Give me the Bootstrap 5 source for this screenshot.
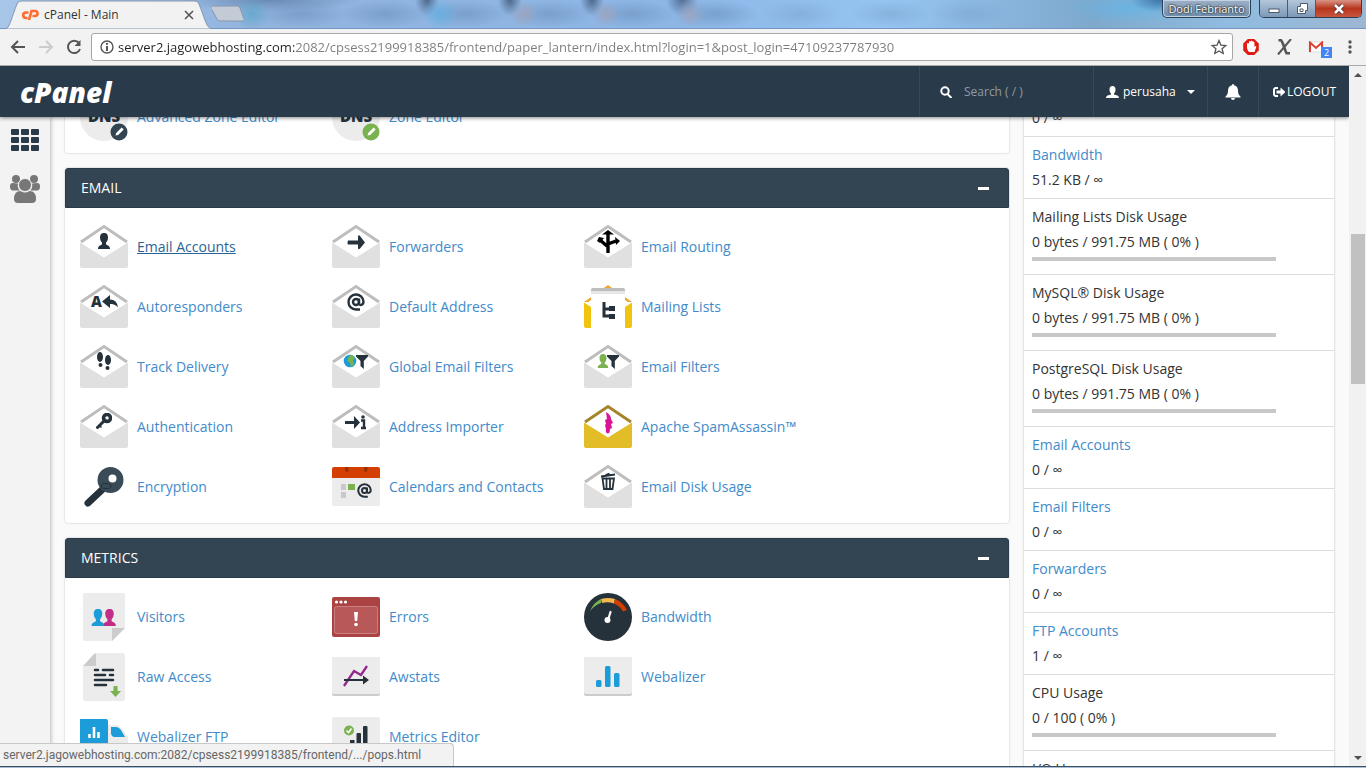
<!DOCTYPE html>
<html lang="en">
<head>
<meta charset="utf-8">
<meta name="viewport" content="width=device-width, initial-scale=1">
<title>cPanel - Main</title>
<link rel="stylesheet" href="https://cdn.jsdelivr.net/npm/bootstrap@5.3.0/dist/css/bootstrap.min.css">
<style>
body{font-family:"Open Sans","Noto Sans",sans-serif;font-size:14px;line-height:20px;color:#333;background:#fafafa}
a{color:#428bca;text-decoration:none}
a:hover,a.hovered{color:#2a6496;text-decoration:underline}
button{font:inherit}
/* browser window */
.win-strip{height:29px;border-bottom:1px solid #7596c4;
 background:
 radial-gradient(ellipse 18px 16px at 252px 14px,#5aa4c8c0,transparent),
 radial-gradient(ellipse 18px 16px at 440px 14px,#5fb0e0c0,transparent),
 radial-gradient(ellipse 14px 14px at 524px 14px,#a3a3b8c0,transparent),
 radial-gradient(ellipse 14px 14px at 606px 14px,#a3a3b8c0,transparent),
 radial-gradient(ellipse 14px 14px at 690px 14px,#a3a3b8c0,transparent),
 radial-gradient(ellipse 50px 14px at 300px 14px,#6d92bfa0,transparent),
 radial-gradient(ellipse 46px 14px at 385px 14px,#6d92bfa0,transparent),
 radial-gradient(ellipse 44px 14px at 466px 14px,#6d92bfa0,transparent),
 radial-gradient(ellipse 44px 14px at 550px 14px,#6d92bfa0,transparent),
 radial-gradient(ellipse 44px 14px at 632px 14px,#6d92bfa0,transparent),
 radial-gradient(ellipse 44px 14px at 715px 14px,#6d92bfa0,transparent),
 radial-gradient(ellipse 40px 14px at 800px 14px,#7fa6d2a0,transparent),
 radial-gradient(ellipse 40px 14px at 890px 14px,#7fa6d2a0,transparent),
 radial-gradient(ellipse 40px 14px at 970px 14px,#7fa6d2a0,transparent),
 radial-gradient(ellipse 12px 16px at 427px 0,#38506ec0,transparent),
 radial-gradient(ellipse 12px 16px at 510px 0,#38506ec0,transparent),
 radial-gradient(ellipse 12px 16px at 592px 0,#38506ec0,transparent),
 radial-gradient(ellipse 16px 16px at 682px 0,#41597ac0,transparent),
 radial-gradient(ellipse 90px 12px at 270px 0,#55779fb0,transparent),
 radial-gradient(ellipse 30px 12px at 1160px 0,#1d5a92b0,transparent),
 radial-gradient(ellipse 70px 16px at 1130px 8px,#62b6e6c0,transparent),
 linear-gradient(90deg,#a8c6e8 0,#92b4de 18%,#8db6e6 50%,#95c5f2 65%,#7fa8cc 80%,#8fbce0 90%,#9db6d2 100%)}
.win-tab{width:212px;height:29px}
.win-tab-label{top:4px;left:44px;right:18px;line-height:22px;font-size:12px;color:#333}
.win-user{height:18px;width:89px;font-size:11px;line-height:16px;color:#fff;text-shadow:0 0 2px #111,0 0 2px #111;background:linear-gradient(#9db1c7,#6f8dab);border:1px solid #2c3f55;border-top:0;border-radius:0 0 5px 5px;box-shadow:inset 0 0 0 1px #c4d3e3}
.win-controls{height:18px;border:1px solid #2c3f55;border-top:0;border-radius:0 0 5px 5px;overflow:hidden}
.win-controls button{width:28px;background:linear-gradient(#b4c6da,#7c98b8);border:0;border-right:1px solid #45597a}
.win-controls button:last-child{width:45px;background:linear-gradient(#d99486,#b8351d 50%,#c9563f);border-right:0}
.win-bar{height:37px;background:#f2f2f2;border-bottom:1px solid #aaa;padding:0 14px 0 9px}
.win-back{margin-right:12px}
.win-address{height:28px;background:#fff;border:1px solid #a6a6a6;border-radius:3px}
.win-address input{font-size:13px;color:#777;background:linear-gradient(90deg,#222 176px,#7c7c7c 176px);-webkit-background-clip:text;background-clip:text;-webkit-text-fill-color:transparent;outline:0}
.win-badge{right:-8px;bottom:-5px;font-size:9px;line-height:11px;width:11px;color:#fff;background:#4285f4}
.win-status{left:0;bottom:0;width:454px;height:23px;background:#f2f2f2;border:1px solid #c8c8c8;border-left:0;border-bottom:0;border-top-right-radius:4px;color:#666;font-family:Roboto,"Open Sans",sans-serif;font-size:12px;line-height:22px;padding-left:3px}
.win-foot{height:2px;border-top:1px solid #3a4f66;background:#a9bdd3}
.scroll-rail{width:17px;background:#f1f1f1}
.scroll-rail button{height:17px}
.rail-above{flex:151}
.rail-below{flex:365}
.scroll-thumb{background:#c1c1c1;margin:0 1px 0 2px;flex:150}
/* control panel */
.cp-head{height:51px;background:#293a4a;color:#fff;font-size:12px;box-shadow:0 1px 4px #0007;z-index:3}
.cp-head > .cell{border-left:1px solid #35495b}
.cp-head a,.cp-head button{color:#fff}
.cp-logo{font-size:28px;font-weight:800;font-style:italic;line-height:40px}
.cp-search{width:174px}
.cp-search input{color:#fff;outline:0}
.cp-search input::placeholder{color:#8f9aa3;opacity:1}
.cp-user{width:114px;padding:0 12px}
.cp-bell{width:51px}
.cp-out{padding:0 13px;gap:2px}
.cp-side{width:50px;background:#f3f3f3;box-shadow:1px 0 4px #0004;padding-top:12px;gap:23px;z-index:2}
.cp-wrap{gap:15px;padding:0 15px}
.cp-main{margin-top:-39px;gap:15px}
.cp-panel{background:#fff;border-radius:3px;box-shadow:0 0 2px #0004}
.cp-title{height:40px;background:#334452;border:1px solid #293a4a;border-radius:3px 3px 0 0;color:#fff;padding:0 19px 0 15px}
.cp-items{display:grid;grid-template-columns:repeat(auto-fill,237px);column-gap:15px;grid-auto-rows:60px;padding:9px 15px 6px}
.cp-items a{display:flex;align-items:center;gap:9px;white-space:nowrap}
.cp-items svg{width:48px;height:48px;flex:none}
.cp-aside{width:310px;margin-top:-17px;background:#fff;box-shadow:0 0 2px #0004}
.cp-stat{padding:5px 8px 6px;border-bottom:1px solid #ddd;line-height:25px}
.cp-stat .progress{width:83%;height:4px;border-radius:0;background:#c8c8c8;margin:3px 0 7px}
</style>
</head>
<body class="vh-100 overflow-hidden d-flex flex-column">
<svg class="d-none" xmlns="http://www.w3.org/2000/svg">
 <symbol id="env" viewBox="0 0 48 48"><path d="M1 19 24 3.500 47 19" fill="#fff" stroke="#bdbdbd" stroke-width="3"/><path d="M3 20 24 5.500 45 20 24 36z" fill="#fff"/><path d="M0 19.500 24 34.500 48 19.500V43a2 2 0 0 1-2 2H2a2 2 0 0 1-2-2z" fill="#e0e0e0"/></symbol>
 <symbol id="man" viewBox="0 0 12 16"><path d="M6 0c3 0 4 2 4 4.500S9 8.500 8 9.500v2c2 1 4 1.500 4 4.500H0c0-3 2-3.500 4-4.500v-2C3 8.500 2 7 2 4.500S3 0 6 0z"/></symbol>
 <symbol id="funnel" viewBox="0 0 12 14"><path d="M0 0h12v1.500L7.800 6v8L4.500 11V6L0 1.500z"/></symbol>
 <symbol id="at" viewBox="0 0 18 18"><g fill="none" stroke="#25313b" stroke-width="2.400"><circle cx="9" cy="9" r="3"/><path d="M12 5.500V10c0 3 4.500 2.500 4.500-1.500A7.500 7.500 0 1 0 9 16.500h4"/></g></symbol>
 <symbol id="minkey" viewBox="0 0 16 16"><path d="M1.500 14.500 9 7" stroke="#25313b" stroke-width="3" stroke-linecap="round"/><path d="m3 12 2.500 2.500" stroke="#25313b" stroke-width="1.500"/><circle cx="11" cy="5" r="3.500" fill="none" stroke="#25313b" stroke-width="3.500"/></symbol>
 <symbol id="dns" viewBox="0 0 48 48"><circle cx="24" cy="24" r="24" fill="#ececec"/><text x="24" y="29" text-anchor="middle" font-family="Open Sans" font-weight="800" font-size="15" fill="#25313b">DNS</text></symbol>
 <symbol id="pen" viewBox="0 0 18 18"><circle cx="9" cy="9" r="8.500"/><path d="m5.500 12.500.7-2.600 5.500-5.500 2 2-5.500 5.500z" fill="#fff"/></symbol>
</svg>

<header class="win-strip d-flex justify-content-between flex-shrink-0">
 <div class="d-flex">
  <div class="win-tab position-relative">
   <svg class="d-block" width="212" height="29" viewBox="0 0 212 29"><path d="M6 29C10 27 12 16 17 4q1-3 4-3h174q3 0 4 3c5 12 7 23 12 25z" fill="#f2f2f2" stroke="#8496b0"/><g fill="none" stroke="#ff6c2c" stroke-width="2.600"><path d="M28.500 12.500h-2.500a2.700 2.700 0 0 0 0 5.500h1.500"/><path d="m29 20 2.500-9h3.500a2.300 2.300 0 0 1 0 5h-2.500"/></g></svg>
   <div class="win-tab-label position-absolute d-flex justify-content-between align-items-center"><span>cPanel - Main</span><button class="btn p-0 border-0 d-flex" aria-label="Close tab"><svg width="10" height="10" viewBox="0 0 10 10"><path d="m1 1 8 8M9 1 1 9" stroke="#555" stroke-width="1.600"/></svg></button></div>
  </div>
  <button class="btn p-0 border-0 d-flex align-items-center" aria-label="New tab"><svg width="32" height="18" viewBox="0 0 32 18"><path d="M0 1h25q2 0 3 2l4 11q1 2-1 2H8q-2 0-3-2L-1 3q-1-2 1-2z" fill="#c2cbd6" stroke="#8797ac"/></svg></button>
 </div>
 <div class="d-flex gap-2 pe-1">
  <button class="win-user p-0">Dodi Febrianto</button>
  <div class="win-controls d-flex">
   <button class="p-0" aria-label="Minimize"><svg class="d-block mx-auto" width="12" height="14"><rect x="1" y="7" width="10" height="3.500" fill="#fff" stroke="#4b5a6c"/></svg></button>
   <button class="p-0" aria-label="Restore"><svg class="d-block mx-auto" width="14" height="14" fill="none"><path d="M5.500 1.500h7v7h-2v3h-8v-7h3z" fill="#fff" stroke="#4b5a6c"/><path d="M5 7h3v2.500H5z" stroke="#4b5a6c"/></svg></button>
   <button class="p-0" aria-label="Close"><svg class="d-block mx-auto" width="14" height="14"><path d="m3 3 8 8M11 3l-8 8" stroke="#5a2a2a" stroke-width="4.500"/><path d="m3 3 8 8M11 3l-8 8" stroke="#fff" stroke-width="2.600"/></svg></button>
  </div>
 </div>
</header>

<nav class="win-bar d-flex align-items-center flex-shrink-0" aria-label="Browser">
 <button class="btn win-back p-0 border-0 d-flex" aria-label="Back"><svg width="18" height="18" fill="none" stroke="#555" stroke-width="2"><path d="M16 9H3M9 3 3 9l6 6"/></svg></button>
 <button class="btn p-0 border-0 d-flex me-2" aria-label="Forward"><svg width="18" height="18" fill="none" stroke="#ccc" stroke-width="2"><path d="M0 9h13M7 3l6 6-6 6"/></svg></button>
 <button class="btn p-0 border-0 d-flex me-2" aria-label="Reload"><svg width="18" height="18" fill="none" stroke="#555" stroke-width="2"><path d="M14 5a6.200 6.200 0 1 0 1 6"/><path d="M15.500 2v6h-6z" fill="#555" stroke="none"/></svg></button>
 <div class="win-address flex-grow-1 d-flex align-items-center px-1">
  <svg class="mx-1 flex-shrink-0" width="14" height="14" fill="none" stroke="#555" stroke-width="1.400"><circle cx="7" cy="7" r="6"/><path d="M7 6v5M7 3v1.800" stroke-width="2"/></svg>
  <input class="flex-grow-1 border-0 p-0" type="text" aria-label="Address" value="server2.jagowebhosting.com:2082/cpsess2199918385/frontend/paper_lantern/index.html?login=1&amp;post_login=47109237787930">
  <button class="btn p-0 border-0 d-flex" aria-label="Bookmark"><svg width="18" height="16" fill="none" stroke="#555" stroke-width="1.300"><path d="m9 1.500 1.900 4.600 4.900.4-3.700 3.200 1.100 4.800L9 12l-4.200 2.500 1.100-4.800-3.700-3.200 4.900-.4z"/></svg></button>
 </div>
 <button class="btn p-0 border-0 d-flex ms-2 me-3" aria-label="Content blocker"><svg width="20" height="18" viewBox="0 0 20 18"><path d="M6.800 1h6.400l4.600 4.500v7L13.200 17H6.800l-4.600-4.500v-7z" fill="#e11b14"/><path d="M6 9.500V6q0-1 1-1t1 1V4q0-1 1-1t1 1V3q1-1 1.600 0v1q1.400-1 1.800.5V9q1-1.500 2-.5L13.500 14H8q-2-2-2-4.500z" fill="#fff"/></svg></button>
 <button class="btn p-0 border-0 d-flex me-3" aria-label="Extension"><svg width="15" height="16" fill="none" stroke="#555"><path d="M1.500 1.200H4C6 3 7.500 10 9.500 14.300H13" stroke-width="2.600"/><path d="M14 0 1 15.500" stroke-width="2"/></svg></button>
 <button class="btn p-0 border-0 d-flex position-relative me-4" aria-label="Mail"><svg width="16" height="12"><path d="M1 1h14v10H1z" fill="#fff" stroke="#ddd"/><path d="M2 11V1.500L8 7l6-5.500V11" fill="none" stroke="#dd4034" stroke-width="2"/></svg><span class="win-badge position-absolute">2</span></button>
 <button class="btn p-0 border-0 d-flex" aria-label="Menu"><svg width="4" height="14" fill="#555"><circle cx="2" cy="2" r="1.700"/><circle cx="2" cy="7" r="1.700"/><circle cx="2" cy="12" r="1.700"/></svg></button>
</nav>

<div class="d-flex flex-grow-1 overflow-hidden position-relative">
 <div class="flex-grow-1 d-flex flex-column overflow-hidden">
  <header class="cp-head d-flex align-items-stretch flex-shrink-0 position-relative">
   <a class="cp-logo me-auto ms-3 ps-1 align-self-center" href="#">cPanel</a>
   <label class="cell cp-search d-flex align-items-center overflow-hidden"><svg class="ms-3 me-2 flex-shrink-0" width="20" height="12" fill="none" stroke="#fff" stroke-width="2"><circle cx="9" cy="5" r="3.700"/><path d="m11.500 8 4 4"/></svg><input class="bg-transparent border-0 p-0 w-50" type="text" placeholder="Search ( / )" aria-label="Search"></label>
   <button class="cell cp-user border-top-0 border-end-0 border-bottom-0 bg-transparent d-flex align-items-center"><svg width="13" height="12" fill="#fff"><path d="M6.500 0C8.500 0 9.500 1.500 9.500 3.500S9 6.500 8 7.500v1c2.500.5 5 1 5 3.500H0C0 9.500 2.500 9 5 8.500v-1C4 6.500 3.500 5.500 3.500 3.500S4.500 0 6.500 0z"/></svg><span class="ms-1 me-auto">perusaha</span><svg width="8" height="4" fill="#fff"><path d="M0 0h8L4 4z"/></svg></button>
   <button class="cell cp-bell border-top-0 border-end-0 border-bottom-0 bg-transparent d-flex align-items-center justify-content-center" aria-label="Notifications"><svg width="16" height="16" fill="#fff"><path d="M8 0q1 0 1 1.200c3 .6 4 3 4 5.800 0 3 1 4 2.500 5.500v1H.5v-1C2 11 3 10 3 7c0-2.800 1-5.200 4-5.800Q7 0 8 0zM6 14h4q0 2-2 2t-2-2z"/></svg></button>
   <a class="cell cp-out d-flex align-items-center" href="#"><svg width="13" height="12"><path d="M6 2H3.500A2 2 0 0 0 2 3.500v4.500A2 2 0 0 0 3.500 10H6" fill="none" stroke="#fff" stroke-width="2"/><path d="M4.500 4.500h4v-3l5 4.500-5 4.500v-3h-4z" fill="#fff"/></svg>LOGOUT</a>
  </header>
  <div class="d-flex flex-grow-1 overflow-hidden">
   <aside class="cp-side d-flex flex-column align-items-center flex-shrink-0">
    <a href="#" aria-label="Home"><svg class="d-block" width="28" height="23" fill="#293a4a"><path id="tile" d="M1 0h6q1 0 1 1v4q0 1-1 1H1Q0 6 0 5V1q0-1 1-1z"/><use href="#tile" x="10"/><use href="#tile" x="20"/><use href="#tile" y="8"/><use href="#tile" x="10" y="8"/><use href="#tile" x="20" y="8"/><use href="#tile" y="16"/><use href="#tile" x="10" y="16"/><use href="#tile" x="20" y="16"/></svg></a>
    <a href="#" aria-label="User manager"><svg class="d-block" width="30" height="28" fill="#777"><circle cx="6" cy="4" r="4"/><circle cx="24" cy="4" r="4"/><path d="M8 8.500Q7 13 10 15.500H3q-3 0-3-4Q0 8 2.500 8zM22 8.500q1 4.500-2 7h7q3 0 3-4Q30 8 27.500 8z"/><circle cx="15" cy="10" r="6.500" stroke="#f3f3f3"/><path d="M10.500 16q4.500 3 9 0Q26 16 26 24q0 4-4 4H8q-4 0-4-4 0-8 6.500-8z"/></svg></a>
   </aside>
   <div class="flex-grow-1 d-flex align-items-start cp-wrap">
    <main class="cp-main flex-grow-1 d-flex flex-column">
     <section class="cp-panel"><div class="cp-items">
      <a href="#"><svg><use href="#dns"/><use href="#pen" x="30" y="30" width="18" height="18" fill="#334452"/></svg>Advanced Zone Editor</a>
      <a href="#"><svg><use href="#dns"/><use href="#pen" x="30" y="30" width="18" height="18" fill="#7ab250"/></svg>Zone Editor</a>
     </div></section>
     <section class="cp-panel">
      <div class="cp-title d-flex justify-content-between align-items-center"><span>EMAIL</span><button class="btn p-0 border-0 d-flex" aria-label="Collapse Email"><svg width="11" height="3"><path d="M0 0h11v3H0z" fill="#fff"/></svg></button></div>
      <div class="cp-items">
       <a class="hovered" href="#"><svg><use href="#env"/><use href="#man" x="18" y="10" width="12" height="16" fill="#25313b"/></svg>Email Accounts</a>
       <a href="#"><svg><use href="#env"/><path d="M16 17.500h10V13q1-1.500 2 0l5 6.500-5 6q-1 1.500-2 0v-4H16q-1-2 0-4z" fill="#25313b"/></svg>Forwarders</a>
       <a href="#"><svg><use href="#env"/><path d="M24 30V9M23 23l-7-6M24 21l8-3" fill="none" stroke="#000" stroke-width="3.400"/><path d="m18 11.500 6-4.500 6 4.500zM13 18l2-4 5 1-4 5zM31 14l5 4-4 4z"/></svg>Email Routing</a>
       <a href="#"><svg><use href="#env"/><text x="11" y="24" font-family="Open Sans" font-size="15" font-weight="800" fill="#25313b">A</text><path d="m22 18.500 8-6.500v4.500q7 0 8 8-3-4-8-3.500v4z" fill="#25313b"/></svg>Autoresponders</a>
       <a href="#"><svg><use href="#env"/><use href="#at" x="15" y="10" width="18" height="18"/></svg>Default Address</a>
       <a href="#"><svg><path d="m0 19 24-17 24 17z" fill="#f0a732"/><path d="M0 19.500 7 24v21H2q-2 0-2-2zM48 19.500 41 24v21h5q2 0 2-2z" fill="#f1c40f"/><path d="M7 8h34v37H7zM3 20l4-3v6zM45 20l-4-3v6z" fill="#fff"/><path d="M7 11V7q0-2 2-2h30q2 0 2 2v4z" fill="#e6e6e6"/><path d="M7 8V7q0-2 2-2h30q2 0 2 2v1z" fill="#bdbdbd"/><path d="M20 19v14h8M20 26h8" fill="none" stroke="#25313b" stroke-width="3"/><path d="M25 23h6v5h-6zM25 31h6v5h-6z" fill="#25313b"/></svg>Mailing Lists</a>
       <a href="#"><svg><use href="#env"/><g fill="#25313b"><ellipse cx="20" cy="14" rx="3" ry="5"/><ellipse cx="28" cy="17" rx="3" ry="5"/><circle cx="20.500" cy="22" r="2"/><circle cx="27.500" cy="25" r="2"/></g></svg>Track Delivery</a>
       <a href="#"><svg><use href="#env"/><circle cx="18" cy="18" r="6.300" fill="#1c9cd8"/><path d="M17 13q4-2 6 2l-2 2 1 5-3 2-1-4-3-2z" fill="#7ab250"/><use href="#funnel" x="24" y="12" width="12" height="14" fill="#25313b"/></svg>Global Email Filters</a>
       <a href="#"><svg><use href="#env"/><use href="#man" x="13" y="11" width="12" height="14" fill="#7ab250"/><use href="#funnel" x="23" y="12" width="12" height="14" fill="#25313b"/></svg>Email Filters</a>
       <a href="#"><svg><use href="#env"/><use href="#minkey" x="16" y="10" width="16" height="16"/></svg>Authentication</a>
       <a href="#"><svg><use href="#env"/><path d="M13 18h9v-5l6 6.500-6 6.500v-5h-9z" fill="#25313b"/><path d="M29 17.500h3V25M29 25h5" fill="none" stroke="#25313b" stroke-width="2.400"/><circle cx="31" cy="14" r="1.800" fill="#25313b"/></svg>Address Importer</a>
       <a href="#"><svg><path d="M1 19 24 3.500 47 19" fill="#fff" stroke="#a5852c" stroke-width="3"/><path d="M0 19.500 24 34.500 48 19.500V43q0 2-2 2H2q-2 0-2-2z" fill="#e2bd27"/><path d="M22 9q5 3 5 7l2 4-2 1 1 4-2 1q0 4-2 4.500-3-.5-2-4.500l-1-4 1-1-1-4 2-1z" fill="#da1293"/></svg>Apache SpamAssassin™</a>
       <a href="#"><svg><path d="M8 40 25 24" stroke="#25313b" stroke-width="7" stroke-linecap="round"/><circle cx="30.500" cy="17" r="13" fill="#394b56"/><circle cx="32.500" cy="15.500" r="4" fill="#fff"/><ellipse cx="26" cy="23" rx="5" ry="2.500" fill="none" stroke="#25313b"/></svg>Encryption</a>
       <a href="#"><svg><path d="M2 5h44q2 0 2 2v34q0 2-2 2H2q-2 0-2-2V7q0-2 2-2z" fill="#ececec"/><path d="M2 4h44q2 0 2 2v9H0V6q0-2 2-2z" fill="#d23f00"/><path d="M13 4v3.500q2 3 3.500 0V4M32 4v3.500q2 3 3.500 0V4" fill="#9c2f00"/><path d="M9 21h5v6H9zM9 29h5v6H9z" fill="#c9c9c9"/><path d="M16 21h7v6h-7z" fill="#7ab250"/><use href="#at" x="25" y="20" width="15" height="15"/></svg>Calendars and Contacts</a>
       <a href="#"><svg><use href="#env"/><path d="M17 13.500l14-2M21.500 12l4-1.500M18.500 15.500h11.500L28.500 26h-8.500zM22.500 15v11M26 15v11" fill="none" stroke="#25313b" stroke-width="1.800"/></svg>Email Disk Usage</a>
      </div>
     </section>
     <section class="cp-panel">
      <div class="cp-title d-flex justify-content-between align-items-center"><span>METRICS</span><button class="btn p-0 border-0 d-flex" aria-label="Collapse Metrics"><svg width="11" height="3"><path d="M0 0h11v3H0z" fill="#fff"/></svg></button></div>
      <div class="cp-items">
       <a href="#"><svg><path d="M5 0h38q2 0 2 2v33L32 48H5q-2 0-2-2V2q0-2 2-2z" fill="#ececec"/><path d="M32 35h13L32 48z" fill="#ccc"/><use href="#man" x="23" y="16" width="13" height="17" fill="#c02e87"/><use href="#man" x="11" y="16" width="14" height="17" fill="#1c9cd8"/></svg>Visitors</a>
       <a href="#"><svg><rect y="4" width="48" height="40" rx="2" fill="#ab4343"/><rect x="2.500" y="13.500" width="43" height="27" rx="2" fill="#b95858" stroke="#c98080"/><g fill="#fff"><circle cx="4.500" cy="9" r="1.600"/><circle cx="9" cy="9" r="1.600"/><circle cx="13.500" cy="9" r="1.600"/><path d="M22 19h4l-.8 9h-2.400z"/><circle cx="24" cy="31.500" r="1.800"/></g></svg>Errors</a>
       <a href="#"><svg><circle cx="24" cy="24" r="24" fill="#25313b"/><path d="M6 18Q10 9 17 6v4Q11 12 6 18z" fill="#7ab250"/><path d="M17 6q7-2 14 0l-1 4.500q-6-2-12-.5z" fill="#f6b84e"/><path d="M31 6q8 3 12 11l-4 1.500Q36 13 30 10.500z" fill="#d23f00"/><path d="m24 27 2.500-8" stroke="#fff" stroke-width="2.200" stroke-linecap="round"/><circle cx="23.500" cy="27" r="3" fill="#fff"/></svg>Bandwidth</a>
       <a href="#"><svg><path d="M16 0h27q2 0 2 2v44q0 2-2 2H5q-2 0-2-2V13z" fill="#ececec"/><path d="M3 13 14 1q2-2 2 1v11z" fill="#ccc"/><path d="M15 17h3M23 17h10M15 22h10M30 22h3M15 27h18M15 32h11" stroke="#25313b" stroke-width="2.600" stroke-linecap="round"/><path d="M33.500 33h4v5H41l-5.500 6-5.500-6h3.500z" fill="#7ab250"/></svg>Raw Access</a>
       <a href="#"><svg><rect y="4" width="48" height="39" rx="2" fill="#ccc"/><rect y="4" width="48" height="37" rx="2" fill="#ececec"/><path d="m12 33 10-15 7 4 6-9" fill="none" stroke="#93278f" stroke-width="2.300"/><path d="M12 26h19v-3.500l6 4.500-6 4.500V28H12z" fill="#25313b"/></svg>Awstats</a>
       <a href="#"><svg><rect y="4" width="48" height="39" rx="2" fill="#ccc"/><rect y="4" width="48" height="37" rx="2" fill="#ececec"/><g fill="#1c9cd8"><rect x="12" y="27" width="5.500" height="7" rx="1.500"/><rect x="21" y="13" width="5.500" height="21" rx="1.500"/><rect x="30" y="20" width="5.500" height="14" rx="1.500"/></g></svg>Webalizer</a>
       <a href="#"><svg><path d="M0 6h26q2 0 2 2v26H0z" fill="#1c9cd8"/><path d="M28 12h8q3 0 5 3l7 9v10H28z" fill="#ececec"/><path d="M31 14h5q3 0 5 3l4 7H34q-3-1-3-4z" fill="#1c9cd8"/><path d="M9.500 25v-4M14 25V14M18.500 25v-6" stroke="#fff" stroke-width="2.600"/><circle cx="12" cy="34" r="4"/><circle cx="37" cy="34" r="4"/></svg>Webalizer FTP</a>
       <a href="#"><svg><rect y="4" width="48" height="40" rx="2" fill="#ececec"/><circle cx="17" cy="17.500" r="5" fill="#7ab250"/><path d="m14.500 17.500 2 2 3-4" fill="none" stroke="#fff" stroke-width="1.500"/><g fill="#25313b"><rect x="12" y="30" width="4.500" height="6"/><rect x="18" y="27" width="4.500" height="9"/><rect x="24.500" y="20" width="4.500" height="16" rx="1"/><rect x="31" y="13" width="4.500" height="23" rx="1"/></g></svg>Metrics Editor</a>
      </div>
     </section>
    </main>
    <aside class="cp-aside flex-shrink-0">
     <div class="cp-stat">0 / ∞</div>
     <div class="cp-stat"><a href="#">Bandwidth</a><div>51.2 KB / ∞</div></div>
     <div class="cp-stat"><div>Mailing Lists Disk Usage</div><div>0 bytes / 991.75 MB ( 0% )</div><div class="progress"></div></div>
     <div class="cp-stat"><div>MySQL® Disk Usage</div><div>0 bytes / 991.75 MB ( 0% )</div><div class="progress"></div></div>
     <div class="cp-stat"><div>PostgreSQL Disk Usage</div><div>0 bytes / 991.75 MB ( 0% )</div><div class="progress"></div></div>
     <div class="cp-stat"><a href="#">Email Accounts</a><div>0 / ∞</div></div>
     <div class="cp-stat"><a href="#">Email Filters</a><div>0 / ∞</div></div>
     <div class="cp-stat"><a href="#">Forwarders</a><div>0 / ∞</div></div>
     <div class="cp-stat"><a href="#">FTP Accounts</a><div>1 / ∞</div></div>
     <div class="cp-stat"><div>CPU Usage</div><div>0 / 100 ( 0% )</div><div class="progress"></div></div>
     <div class="cp-stat">I/O Usage</div>
    </aside>
   </div>
  </div>
 </div>
 <div class="scroll-rail d-flex flex-column flex-shrink-0">
  <button class="btn p-0 border-0 d-flex align-items-center justify-content-center" aria-label="Scroll up"><svg width="8" height="4" fill="#505050"><path d="M0 4h8L4 0z"/></svg></button>
  <div class="rail-above"></div><div class="scroll-thumb"></div><div class="rail-below"></div>
  <button class="btn p-0 border-0 d-flex align-items-center justify-content-center" aria-label="Scroll down"><svg width="8" height="4" fill="#505050"><path d="M0 0h8L4 4z"/></svg></button>
 </div>
 <div class="win-status position-absolute z-3">server2.jagowebhosting.com:2082/cpsess2199918385/frontend/.../pops.html</div>
</div>
<footer class="win-foot flex-shrink-0"></footer>
<script src="https://cdn.jsdelivr.net/npm/bootstrap@5.3.0/dist/js/bootstrap.bundle.min.js"></script>
</body>
</html>
